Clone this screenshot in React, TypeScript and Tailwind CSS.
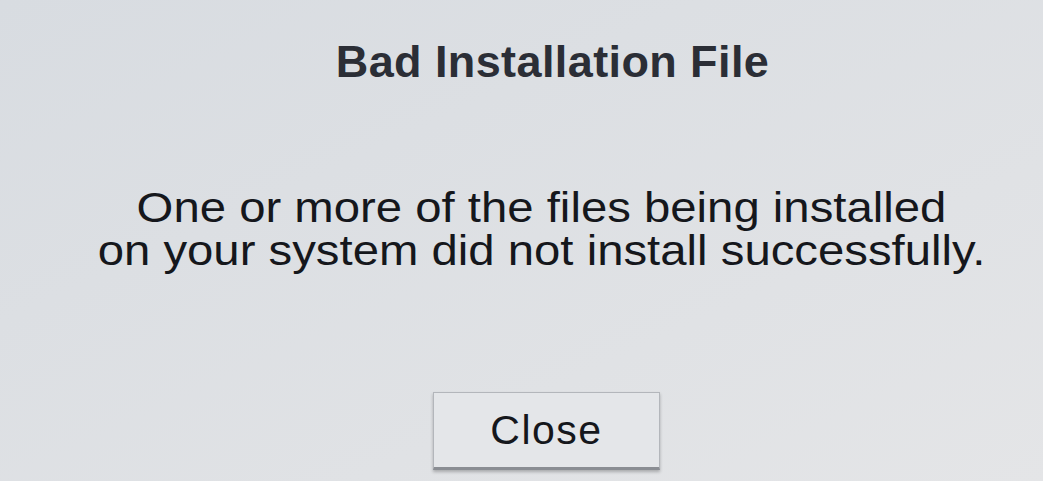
export default function App() {
  return (
    <div
      className="w-[1043px] h-[481px] overflow-hidden bg-linear-to-br from-[#d8dce1] to-[#e4e5e7] flex flex-col items-center pl-[40px]"
      style={{ fontFamily: '"Liberation Sans", Arial, sans-serif' }}
    >
      <h1 className="mt-[34px] ml-[22px] text-[45px] leading-[56px] font-bold text-[#2b2e36] tracking-[0.4px]">
        Bad Installation File
      </h1>
      <p className="mt-[96px] text-[43px] leading-[43px] scale-x-[1.1] text-center text-[#15171c] whitespace-nowrap">
        One or more of the files being installed
        <br />
        on your system did not install successfully.
      </p>
      <button className="mt-[120px] ml-[10px] w-[227px] h-[78px] bg-[#e4e6e9] border border-[#b3b6bb] border-b-[3px] border-b-[#8a8d93] shadow-[0_2px_3px_rgba(0,0,0,0.25)] text-[41px] tracking-[1.5px] leading-none text-[#15171c]">
        Close
      </button>
    </div>
  );
}
